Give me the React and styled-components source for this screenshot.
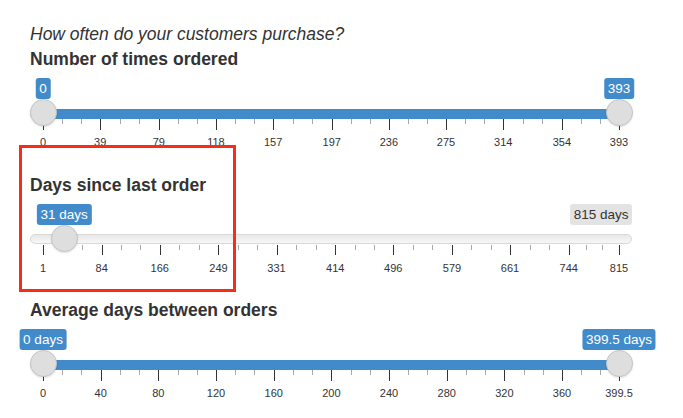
import React from "react";
import styled, { createGlobalStyle } from "styled-components";

const GlobalStyle = createGlobalStyle`
  body {
    margin: 0;
    background: #ffffff;
    font-family: "Liberation Sans", Arial, Helvetica, sans-serif;
    color: #333333;
  }
`;

const Page = styled.div`
  position: relative;
  display: flex;
  flex-direction: column;
  gap: 4px;
  width: 602px;
  padding: 24.1px 0 0 30px;
`;

const Intro = styled.p`
  margin: 0;
  font-size: 17.5px;
  line-height: 21px;
  font-style: italic;
  color: #333;
`;

const Stack = styled.div`
  display: flex;
  flex-direction: column;
  gap: 25.2px;
`;

const Group = styled.div`
  display: flex;
  flex-direction: column;
`;

const Title = styled.div`
  font-size: 17.5px;
  line-height: 21px;
  font-weight: bold;
  color: #333;
  margin-bottom: 8px;
`;

const LabelRow = styled.div`
  position: relative;
  display: flex;
  justify-content: flex-end;
  height: 21px;
`;

const Bubble = styled.span`
  position: absolute;
  top: 0;
  transform: translateX(-50%);
  padding: 0 3.5px;
  border-radius: 3px;
  font-size: 13.5px;
  line-height: 21px;
  white-space: nowrap;
  background: #428bca;
  color: #fff;
`;

const MaxBubble = styled.span`
  padding: 0 3.5px;
  border-radius: 3px;
  font-size: 13.5px;
  line-height: 21px;
  white-space: nowrap;
  background: #e3e3e3;
  color: #333;
`;

const TrackRow = styled.div`
  position: relative;
  display: flex;
  flex-direction: column;
  height: 20px;
  padding-top: 9.5px;
  box-sizing: border-box;
`;

const Line = styled.div`
  height: 10px;
  box-sizing: border-box;
  border: 1px solid #d9d9d9;
  border-radius: 5px;
  background: linear-gradient(#e8e8e8, #f7f7f7);
`;

const Bar = styled.div`
  position: absolute;
  top: 9.5px;
  height: 10px;
  background: #428bca;
`;

const Handle = styled.div`
  position: absolute;
  top: 0;
  z-index: 2;
  width: 27px;
  height: 27px;
  margin-left: -13.5px;
  box-sizing: border-box;
  border-radius: 50%;
  border: 1px solid #c4c4c4;
  background: #dedede;
  box-shadow: 0 1px 2px rgba(0, 0, 0, 0.12);
`;

const Grid = styled.div`
  position: relative;
  height: 30.3px;
`;

const Tick = styled.div`
  position: absolute;
  top: 0;
  width: 1px;
  height: ${(p) => (p.$major ? "10.5px" : "5px")};
  background: ${(p) => (p.$major ? "#333" : "#a8a8a8")};
`;

const TickLabel = styled.span`
  position: absolute;
  top: 17.3px;
  transform: translateX(-50%);
  font-size: 11px;
  line-height: 13px;
  color: #333;
  white-space: nowrap;
`;

const Highlight = styled.div`
  position: absolute;
  left: 19px;
  top: 145px;
  width: 217px;
  height: 147px;
  box-sizing: border-box;
  border: 3px solid #f72d1c;
`;

const at = (p) => `calc(13px + ${p} * (100% - 26px))`;

const sliders = [
  {
    title: "Number of times ordered",
    min: 0,
    max: 393,
    from: 0,
    to: 393,
    unit: "",
    ticks: [0, 39, 79, 118, 157, 197, 236, 275, 314, 354, 393],
  },
  {
    title: "Days since last order",
    min: 1,
    max: 815,
    from: 31,
    unit: " days",
    ticks: [1, 84, 166, 249, 331, 414, 496, 579, 661, 744, 815],
  },
  {
    title: "Average days between orders",
    min: 0,
    max: 399.5,
    from: 0,
    to: 399.5,
    unit: " days",
    ticks: [0, 40, 80, 120, 160, 200, 240, 280, 320, 360, 399.5],
  },
];

const RangeSlider = ({ s }) => {
  const pct = (v) => (v - s.min) / (s.max - s.min);
  const range = s.to !== undefined;
  const minor = [];
  for (let i = 0; i < s.ticks.length - 1; i++) {
    const a = pct(s.ticks[i]);
    const b = pct(s.ticks[i + 1]);
    minor.push(a + (b - a) / 3, a + (2 * (b - a)) / 3);
  }

  return (
    <Group>
      <Title>{s.title}</Title>
      <LabelRow>
        <Bubble style={{ left: at(pct(s.from)) }}>
          {s.from}
          {s.unit}
        </Bubble>
        {range ? (
          <Bubble style={{ left: at(pct(s.to)) }}>
            {s.to}
            {s.unit}
          </Bubble>
        ) : (
          <MaxBubble>
            {s.max}
            {s.unit}
          </MaxBubble>
        )}
      </LabelRow>
      <TrackRow>
        <Line />
        {range && (
          <Bar
            style={{
              left: at(pct(s.from)),
              width: `calc(${pct(s.to) - pct(s.from)} * (100% - 26px))`,
            }}
          />
        )}
        <Handle style={{ left: at(pct(s.from)) }} />
        {range && <Handle style={{ left: at(pct(s.to)) }} />}
      </TrackRow>
      <Grid>
        {minor.map((p, i) => (
          <Tick key={"m" + i} style={{ left: at(p) }} />
        ))}
        {s.ticks.map((t) => (
          <React.Fragment key={t}>
            <Tick $major style={{ left: at(pct(t)) }} />
            <TickLabel style={{ left: at(pct(t)) }}>{t}</TickLabel>
          </React.Fragment>
        ))}
      </Grid>
    </Group>
  );
};

export default function App() {
  return (
    <>
      <GlobalStyle />
      <Page>
        <Intro>How often do your customers purchase?</Intro>
        <Stack>
          {sliders.map((s) => (
            <RangeSlider key={s.title} s={s} />
          ))}
        </Stack>
        <Highlight />
      </Page>
    </>
  );
}
